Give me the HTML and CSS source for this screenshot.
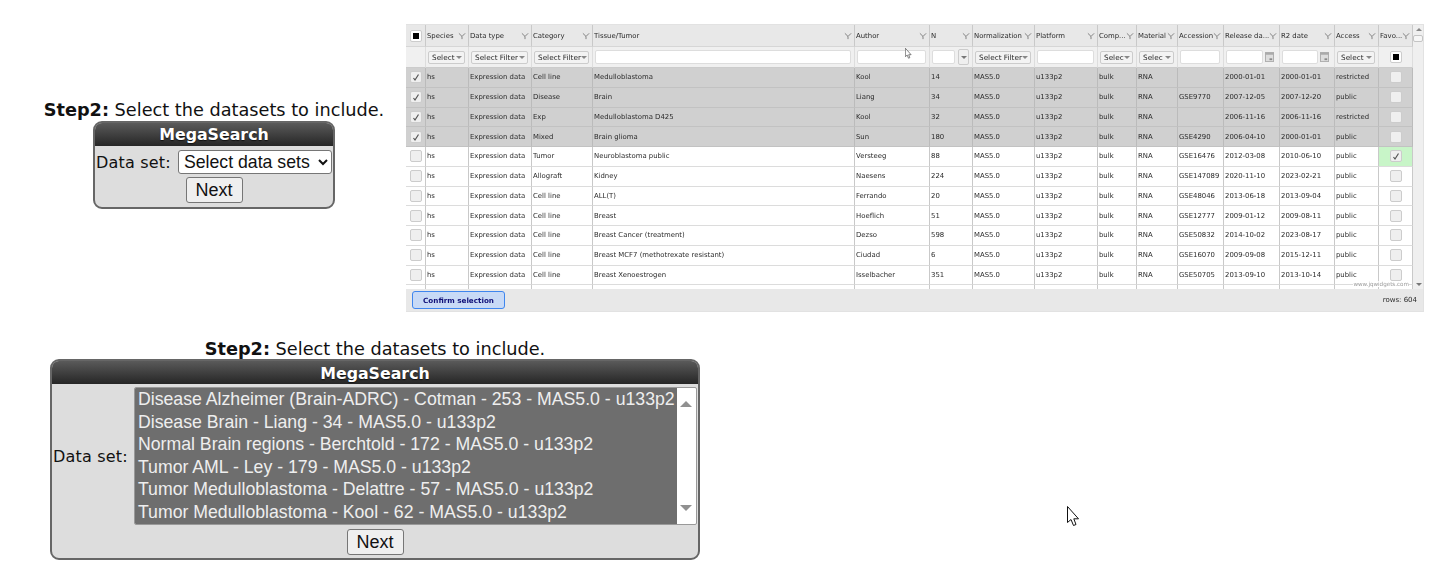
FILE: index.html
```html
<!DOCTYPE html>
<html lang="en">
  <head>
    <meta charset="UTF-8" />
    <title>MegaSearch</title>
    <link rel="stylesheet" href="styles.css">
  </head>
  <body>
    <svg class="defs" width="0" height="0">
      <symbol id="funnel" viewBox="0 0 9 9"><path d="M1 1.5 L4.5 5 L8 1.5 M4.5 5 V8" fill="none" stroke="#777" stroke-width="1"/></symbol>
      <symbol id="tick" viewBox="0 0 12 12"><path d="M3.5 7 L5 9 L8.5 3.5" fill="none" stroke="#555" stroke-width="1.2"/></symbol>
      <symbol id="cal" viewBox="0 0 10 11"><rect width="10" height="11" fill="#aaa"/><rect x="1" y="3" width="8" height="7" fill="#ddd"/><rect x="5" y="7" width="3" height="2" fill="#888"/></symbol>
    </svg>

    <div class="top">
      <div class="left">
        <p class="step"><b>Step2:</b> Select the datasets to include.</p>
        <div class="panel small">
          <div class="panel-head">MegaSearch</div>
          <div class="panel-row">
            <span class="label">Data set:</span>
            <select class="ds-select"><option>Select data sets</option></select>
          </div>
          <button class="next">Next</button>
        </div>
      </div>

      <div class="grid">
        <div class="grid-main">
          <table>
            <colgroup>
              <col class="c20"><col class="c43"><col class="c63"><col class="c61"><col class="c262"><col class="c75"><col class="c43"><col class="c62"><col class="c63"><col class="c39"><col class="c41"><col class="c46"><col class="c56"><col class="c55"><col class="c44"><col class="c34">
            </colgroup>
            <tr class="head">
              <th class="box"><span class="check all"></span></th>
              <th><div><span>Species</span><svg><use href="#funnel"/></svg></div></th>
              <th><div><span>Data type</span><svg><use href="#funnel"/></svg></div></th>
              <th><div><span>Category</span><svg><use href="#funnel"/></svg></div></th>
              <th><div><span>Tissue/Tumor</span><svg><use href="#funnel"/></svg></div></th>
              <th><div><span>Author</span><svg><use href="#funnel"/></svg></div></th>
              <th><div><span>N</span><svg><use href="#funnel"/></svg></div></th>
              <th><div><span>Normalization</span><svg><use href="#funnel"/></svg></div></th>
              <th><div><span>Platform</span><svg><use href="#funnel"/></svg></div></th>
              <th><div><span>Comp...</span><svg><use href="#funnel"/></svg></div></th>
              <th><div><span>Material</span><svg><use href="#funnel"/></svg></div></th>
              <th><div><span>Accession</span><svg><use href="#funnel"/></svg></div></th>
              <th><div><span>Release da...</span><svg><use href="#funnel"/></svg></div></th>
              <th><div><span>R2 date</span><svg><use href="#funnel"/></svg></div></th>
              <th><div><span>Access</span><svg><use href="#funnel"/></svg></div></th>
              <th><div><span>Favo...</span><svg><use href="#funnel"/></svg></div></th>
            </tr>
            <tr class="filters">
              <td></td>
              <td><span class="pick">Select</span></td>
              <td><span class="pick">Select Filter</span></td>
              <td><span class="pick">Select Filter</span></td>
              <td><span class="text-in"></span></td>
              <td><span class="text-in"></span></td>
              <td><div class="num-in"><span class="text-in"></span><span class="num-drop"></span></div></td>
              <td><span class="pick">Select Filter</span></td>
              <td><span class="text-in"></span></td>
              <td><span class="pick">Selec</span></td>
              <td><span class="pick">Selec</span></td>
              <td><span class="text-in"></span></td>
              <td><div class="date-in"><span class="text-in"></span><svg><use href="#cal"/></svg></div></td>
              <td><div class="date-in"><span class="text-in"></span><svg><use href="#cal"/></svg></div></td>
              <td><span class="pick">Select</span></td>
              <td class="box"><span class="check all"></span></td>
            </tr>
            <tr class="sel">
              <td class="box"><span class="check"><svg><use href="#tick"/></svg></span></td>
              <td>hs</td><td>Expression data</td><td>Cell line</td><td>Medulloblastoma</td><td>Kool</td><td>14</td><td>MAS5.0</td><td>u133p2</td><td>bulk</td><td>RNA</td><td></td><td>2000-01-01</td><td>2000-01-01</td><td>restricted</td>
              <td class="box"><span class="check"></span></td>
            </tr>
            <tr class="sel">
              <td class="box"><span class="check"><svg><use href="#tick"/></svg></span></td>
              <td>hs</td><td>Expression data</td><td>Disease</td><td>Brain</td><td>Liang</td><td>34</td><td>MAS5.0</td><td>u133p2</td><td>bulk</td><td>RNA</td><td>GSE9770</td><td>2007-12-05</td><td>2007-12-20</td><td>public</td>
              <td class="box"><span class="check"></span></td>
            </tr>
            <tr class="sel">
              <td class="box"><span class="check"><svg><use href="#tick"/></svg></span></td>
              <td>hs</td><td>Expression data</td><td>Exp</td><td>Medulloblastoma D425</td><td>Kool</td><td>32</td><td>MAS5.0</td><td>u133p2</td><td>bulk</td><td>RNA</td><td></td><td>2006-11-16</td><td>2006-11-16</td><td>restricted</td>
              <td class="box"><span class="check"></span></td>
            </tr>
            <tr class="sel">
              <td class="box"><span class="check"><svg><use href="#tick"/></svg></span></td>
              <td>hs</td><td>Expression data</td><td>Mixed</td><td>Brain glioma</td><td>Sun</td><td>180</td><td>MAS5.0</td><td>u133p2</td><td>bulk</td><td>RNA</td><td>GSE4290</td><td>2006-04-10</td><td>2000-01-01</td><td>public</td>
              <td class="box"><span class="check"></span></td>
            </tr>
            <tr>
              <td class="box"><span class="check"></span></td>
              <td>hs</td><td>Expression data</td><td>Tumor</td><td>Neuroblastoma public</td><td>Versteeg</td><td>88</td><td>MAS5.0</td><td>u133p2</td><td>bulk</td><td>RNA</td><td>GSE16476</td><td>2012-03-08</td><td>2010-06-10</td><td>public</td>
              <td class="box fav"><span class="check"><svg><use href="#tick"/></svg></span></td>
            </tr>
            <tr>
              <td class="box"><span class="check"></span></td>
              <td>hs</td><td>Expression data</td><td>Allograft</td><td>Kidney</td><td>Naesens</td><td>224</td><td>MAS5.0</td><td>u133p2</td><td>bulk</td><td>RNA</td><td>GSE147089</td><td>2020-11-10</td><td>2023-02-21</td><td>public</td>
              <td class="box"><span class="check"></span></td>
            </tr>
            <tr>
              <td class="box"><span class="check"></span></td>
              <td>hs</td><td>Expression data</td><td>Cell line</td><td>ALL(T)</td><td>Ferrando</td><td>20</td><td>MAS5.0</td><td>u133p2</td><td>bulk</td><td>RNA</td><td>GSE48046</td><td>2013-06-18</td><td>2013-09-04</td><td>public</td>
              <td class="box"><span class="check"></span></td>
            </tr>
            <tr>
              <td class="box"><span class="check"></span></td>
              <td>hs</td><td>Expression data</td><td>Cell line</td><td>Breast</td><td>Hoeflich</td><td>51</td><td>MAS5.0</td><td>u133p2</td><td>bulk</td><td>RNA</td><td>GSE12777</td><td>2009-01-12</td><td>2009-08-11</td><td>public</td>
              <td class="box"><span class="check"></span></td>
            </tr>
            <tr>
              <td class="box"><span class="check"></span></td>
              <td>hs</td><td>Expression data</td><td>Cell line</td><td>Breast Cancer (treatment)</td><td>Dezso</td><td>598</td><td>MAS5.0</td><td>u133p2</td><td>bulk</td><td>RNA</td><td>GSE50832</td><td>2014-10-02</td><td>2023-08-17</td><td>public</td>
              <td class="box"><span class="check"></span></td>
            </tr>
            <tr>
              <td class="box"><span class="check"></span></td>
              <td>hs</td><td>Expression data</td><td>Cell line</td><td>Breast MCF7 (methotrexate resistant)</td><td>Ciudad</td><td>6</td><td>MAS5.0</td><td>u133p2</td><td>bulk</td><td>RNA</td><td>GSE16070</td><td>2009-09-08</td><td>2015-12-11</td><td>public</td>
              <td class="box"><span class="check"></span></td>
            </tr>
            <tr>
              <td class="box"><span class="check"></span></td>
              <td>hs</td><td>Expression data</td><td>Cell line</td><td>Breast Xenoestrogen</td><td>Isselbacher</td><td>351</td><td>MAS5.0</td><td>u133p2</td><td>bulk</td><td>RNA</td><td>GSE50705</td><td>2013-09-10</td><td>2013-10-14</td><td>public</td>
              <td class="box"><span class="check"></span></td>
            </tr>
            <tr>
              <td></td><td></td><td></td><td></td><td></td><td></td><td></td><td></td><td></td><td></td><td></td><td></td><td></td><td></td><td></td><td></td>
            </tr>
          </table>
          <div class="vscroll">
            <span class="arrow up"></span>
            <span class="thumb"></span>
            <span class="arrow down"></span>
          </div>
          <span class="watermark">www.jqwidgets.com</span>
        </div>
        <div class="grid-foot">
          <button class="confirm">Confirm selection</button>
          <span class="rows">rows: 604</span>
        </div>
      </div>
    </div>

    <div class="bottom">
      <p class="step"><b>Step2:</b> Select the datasets to include.</p>
      <div class="panel large">
        <div class="panel-head">MegaSearch</div>
        <div class="panel-row">
          <span class="label">Data set:</span>
          <div class="listbox">
            <ul>
              <li>Disease Alzheimer (Brain-ADRC) - Cotman - 253 - MAS5.0 - u133p2</li>
              <li>Disease Brain - Liang - 34 - MAS5.0 - u133p2</li>
              <li>Normal Brain regions - Berchtold - 172 - MAS5.0 - u133p2</li>
              <li>Tumor AML - Ley - 179 - MAS5.0 - u133p2</li>
              <li>Tumor Medulloblastoma - Delattre - 57 - MAS5.0 - u133p2</li>
              <li>Tumor Medulloblastoma - Kool - 62 - MAS5.0 - u133p2</li>
            </ul>
            <div class="list-scroll">
              <span class="arrow up"></span>
              <span class="arrow down"></span>
            </div>
          </div>
        </div>
        <button class="next">Next</button>
      </div>
    </div>

    <svg class="cursor big" viewBox="0 0 13 21"><path d="M0.5 0.5 V16.5 L4 13.5 L6.5 19.5 L9 18.5 L6.8 12.8 H11.5 Z" fill="#fff" stroke="#111" stroke-width="1"/></svg>
    <svg class="cursor tiny" viewBox="0 0 13 21"><path d="M0.5 0.5 V16.5 L4 13.5 L6.5 19.5 L9 18.5 L6.8 12.8 H11.5 Z" fill="#fff" stroke="#555" stroke-width="1.4"/></svg>
  </body>
</html>
```

FILE: styles.css
```css
body {
  margin: 0;
  font-family: "DejaVu Sans", Verdana, sans-serif;
  color: #111;
  background: #fff;
  position: relative;
  height: 582px;
  overflow: hidden;
}

.defs {
  position: absolute;
}

.top {
  display: flex;
  align-items: flex-start;
  padding: 24px 0 0 30px;
}

.left {
  width: 368px;
  margin-right: 8px;
  padding-top: 76px;
  display: flex;
  flex-direction: column;
  align-items: center;
}

.step {
  margin: 0;
  font-size: 17.7px;
  line-height: 21px;
  white-space: nowrap;
  text-align: center;
}

.panel {
  box-sizing: border-box;
  border: 2px solid #666;
  border-radius: 9px;
  background: #ddd;
  overflow: hidden;
  text-align: center;
}

.small {
  width: 242px;
  height: 88px;
}

.large {
  width: 650px;
  height: 201px;
}

.panel-head {
  height: 23px;
  line-height: 25px;
  margin-top: -1px;
  padding-top: 1px;
  background: linear-gradient(#5c5c5c, #262626);
  color: #fff;
  font-weight: bold;
  font-size: 15.8px;
  text-shadow: 0 1px 1px #111;
}

.small .panel-head {
  line-height: 23px;
}

.panel-row {
  display: flex;
  align-items: center;
}

.small .panel-row {
  padding: 4px 0 0 1px;
  gap: 7px;
}

.large .panel-row {
  padding: 3px 0 0 1px;
  gap: 6px;
}

.label {
  font-size: 16px;
  letter-spacing: 0.2px;
  white-space: nowrap;
}

.ds-select {
  width: 154px;
  height: 24px;
  padding: 0 0 0 1px;
  font-family: "Liberation Sans", Arial, sans-serif;
  font-size: 17.7px;
  color: #111;
  background: #fff;
  border: 1px solid #767676;
  border-radius: 3px;
}

.next {
  display: block;
  box-sizing: border-box;
  width: 57px;
  height: 26px;
  margin: 3px auto 0;
  padding: 0;
  font-family: "Liberation Sans", Arial, sans-serif;
  font-size: 18px;
  color: #111;
  background: #efefef;
  border: 1px solid #767676;
  border-radius: 3px;
}

.large .next {
  margin-top: 4px;
}

/* data grid */
.grid {
  box-sizing: border-box;
  width: 1018px;
  height: 288px;
  border: 1px solid #e2e2e2;
  border-left: 0;
  font-size: 6.9px;
  color: #2a2a2a;
  filter: blur(0.35px);
  display: flex;
  flex-direction: column;
  background: #fff;
}

.grid-main {
  position: relative;
  height: 264px;
  overflow: hidden;
  background: #fff;
}

table {
  table-layout: fixed;
  border-collapse: separate;
  border-spacing: 0;
  width: 1007px;
}

.c20 { width: 20px; }
.c34 { width: 34px; }
.c39 { width: 39px; }
.c41 { width: 41px; }
.c43 { width: 43px; }
.c44 { width: 44px; }
.c46 { width: 46px; }
.c55 { width: 55px; }
.c56 { width: 56px; }
.c61 { width: 61px; }
.c62 { width: 62px; }
.c63 { width: 63px; }
.c75 { width: 75px; }
.c262 { width: 262px; }

th,
td {
  box-sizing: border-box;
  height: 19.75px;
  padding: 0 0 0 1px;
  border-right: 1px solid #c9c9c9;
  border-bottom: 1px solid #dcdcdc;
  font-weight: normal;
  text-align: left;
  white-space: nowrap;
  overflow: hidden;
}

.head th {
  height: 22px;
  padding-right: 2px;
  background: #e8e8e8;
  border-bottom: 1px solid #d6d6d6;
}

.head th div {
  display: flex;
  justify-content: space-between;
  align-items: center;
}

.head svg {
  width: 8px;
  height: 8px;
  flex: none;
}

.filters td {
  height: 21px;
  background: #f0f0f0;
  padding: 0 3px 0 2px;
  border-right-color: #ddd;
  border-bottom: 1px solid #ccc;
}

.pick {
  display: flex;
  justify-content: space-between;
  align-items: center;
  box-sizing: border-box;
  height: 13px;
  padding: 0 2px 0 3px;
  font-size: 7.3px;
  background: #f3f3f3;
  border: 1px solid #ccc;
  border-radius: 2px;
}

.pick::after {
  content: "";
  border-top: 3px solid #888;
  border-left: 3px solid transparent;
  border-right: 3px solid transparent;
}

.text-in {
  display: block;
  box-sizing: border-box;
  height: 14px;
  background: #fff;
  border: 1px solid #ddd;
  border-radius: 2px;
}

.num-in,
.date-in {
  display: flex;
  align-items: center;
}

.num-in .text-in,
.date-in .text-in {
  flex: 1;
}

.num-drop {
  position: relative;
  width: 11px;
  height: 16px;
  margin-left: 3px;
  background: #efefef;
  border: 1px solid #ccc;
  border-radius: 2px;
  box-sizing: border-box;
}

.num-drop::after {
  content: "";
  position: absolute;
  left: 2px;
  top: 6px;
  border-top: 3px solid #777;
  border-left: 3px solid transparent;
  border-right: 3px solid transparent;
}

.date-in svg {
  width: 9px;
  height: 10px;
  margin: 0 2px;
  flex: none;
}

.sel td {
  background: #d0d0d0;
  border-bottom-color: #c2c2c2;
  border-right-color: #bbb;
}

td.box,
th.box,
.filters td.box {
  padding: 0;
  text-align: center;
}

.fav {
  background: #c8f5c8;
}

.check {
  display: inline-block;
  box-sizing: border-box;
  position: relative;
  width: 12px;
  height: 12px;
  vertical-align: middle;
  background: #efefef;
  border: 1px solid #ccc;
  border-radius: 2px;
}

.check svg {
  position: absolute;
  left: -1px;
  top: -1px;
  width: 12px;
  height: 12px;
}

.all {
  background: #fff;
}

.all::after {
  content: "";
  position: absolute;
  left: 2px;
  top: 2px;
  width: 6px;
  height: 6px;
  background: #000;
}

.vscroll {
  position: absolute;
  left: 1007px;
  top: 0;
  bottom: 0;
  width: 11px;
  background: #efefef;
}

.vscroll .up {
  position: absolute;
  left: 3px;
  top: 3px;
}

.vscroll .down {
  position: absolute;
  left: 3px;
  bottom: 3px;
}

.thumb {
  position: absolute;
  left: 0;
  top: 10px;
  box-sizing: border-box;
  width: 10px;
  height: 7px;
  background: #f6f6f6;
  border: 1px solid #c4c4c4;
  border-radius: 2px;
}

.arrow {
  display: block;
  width: 0;
  height: 0;
  border-left: 3px solid transparent;
  border-right: 3px solid transparent;
}

.vscroll .arrow.up {
  border-bottom: 3px solid #888;
}

.vscroll .arrow.down {
  border-top: 3px solid #777;
}

.watermark {
  position: absolute;
  right: 14px;
  bottom: 2px;
  font-size: 5.6px;
  color: #999;
  background: #fff;
}

.grid-foot {
  flex: 1;
  display: flex;
  justify-content: space-between;
  align-items: center;
  padding: 0 6px;
  background: #e8e8e8;
}

.confirm {
  box-sizing: border-box;
  width: 93px;
  height: 18px;
  padding: 0;
  font-family: "DejaVu Sans", Verdana, sans-serif;
  font-size: 7.2px;
  font-weight: bold;
  color: #101078;
  background: #c8daf6;
  border: 1px solid #3f86ee;
  border-radius: 3px;
}

.rows {
  font-size: 7px;
}

/* second panel */
.bottom {
  width: 650px;
  margin: 27px 0 0 50px;
  display: flex;
  flex-direction: column;
  align-items: center;
}

.bottom .step {
  height: 20px;
  line-height: 20px;
}

.listbox {
  display: flex;
  width: 563px;
  height: 138px;
  box-sizing: border-box;
  background: #fff;
  border: 1px solid #999;
  border-radius: 2px;
  font-family: "Liberation Sans", Arial, sans-serif;
  font-size: 17.7px;
  overflow: hidden;
}

.listbox ul {
  flex: 1;
  min-width: 0;
  margin: 0;
  padding: 0;
  list-style: none;
  background: #6e6e6e;
  color: #eee;
  text-align: left;
}

.listbox li {
  height: 22.6px;
  line-height: 22.6px;
  padding-left: 3px;
  white-space: nowrap;
}

.list-scroll {
  display: flex;
  flex-direction: column;
  justify-content: space-between;
  align-items: center;
  flex: none;
  width: 19px;
  padding: 13px 0;
  box-sizing: border-box;
}

.list-scroll .arrow {
  border-left-width: 6px;
  border-right-width: 6px;
}

.list-scroll .arrow.up {
  border-bottom: 6px solid #909090;
}

.list-scroll .arrow.down {
  border-top: 6px solid #909090;
}

/* mouse pointers caught in the screenshot */
.cursor {
  position: absolute;
}

.big {
  left: 1067px;
  top: 506px;
  width: 13px;
  height: 21px;
}

.tiny {
  left: 905px;
  top: 48px;
  width: 7px;
  height: 11px;
}
```
